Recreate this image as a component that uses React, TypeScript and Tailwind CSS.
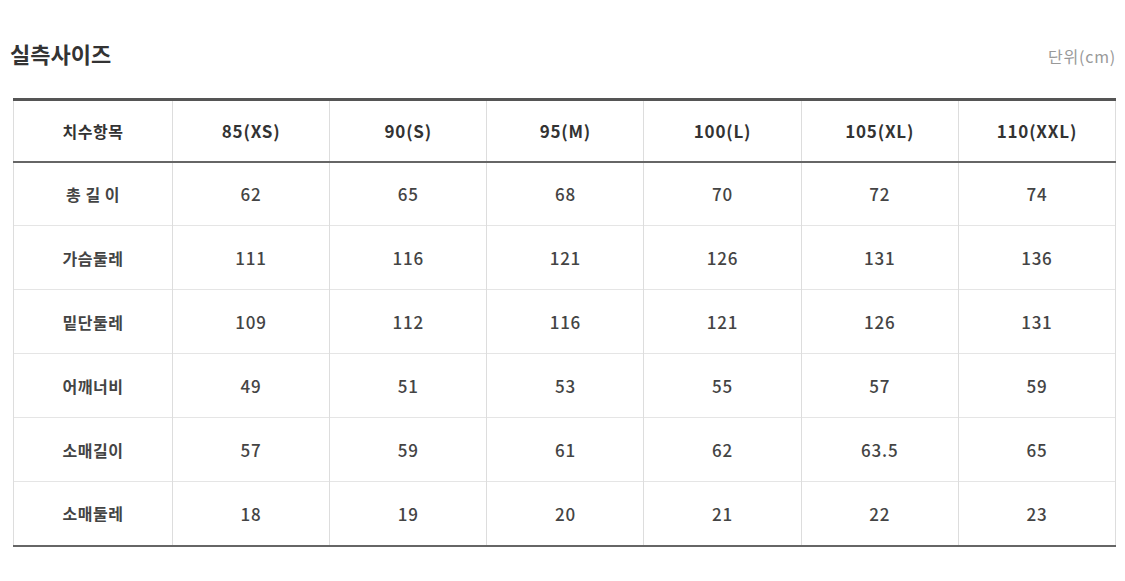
import React from "react";

const sizes = ["85(XS)", "90(S)", "95(M)", "100(L)", "105(XL)", "110(XXL)"];
const rows: [string, string[]][] = [
  ["총 길 이", ["62", "65", "68", "70", "72", "74"]],
  ["가슴둘레", ["111", "116", "121", "126", "131", "136"]],
  ["밑단둘레", ["109", "112", "116", "121", "126", "131"]],
  ["어깨너비", ["49", "51", "53", "55", "57", "59"]],
  ["소매길이", ["57", "59", "61", "62", "63.5", "65"]],
  ["소매둘레", ["18", "19", "20", "21", "22", "23"]],
];

export default function App() {
  return (
    <div
      className="w-[1125px] h-[581px] bg-white text-[#333]"
      style={{ fontFamily: '"Noto Sans CJK KR", "Noto Sans", sans-serif' }}
    >
      <div className="flex items-end justify-between pl-[10px] pr-[9px] pt-[36px] h-[68px]">
        <div className="text-[22px] font-bold leading-[30px] text-[#333]">실측사이즈</div>
        <div className="text-[16px] leading-[22px] text-[#999] tracking-[0.8px] mb-[1px]">단위(cm)</div>
      </div>
      <div className="pl-[13px] pr-[9px] pt-[30px]">
        <table className="w-full border-collapse table-fixed border-t-[3px] border-t-[#555] border-b-2 border-b-[#666]">
          <colgroup>
            <col className="w-[159px]" />
            <col />
            <col />
            <col />
            <col />
            <col />
            <col />
          </colgroup>
          <thead>
            <tr className="h-[62px] border-b-2 border-b-[#666]">
              <th className="border-l border-l-[#ddd] border-r border-r-[#ddd] text-[16px] font-bold text-[#333] tracking-[0.5px]">치수항목</th>
              {sizes.map((s) => (
                <th
                  key={s}
                  className="text-[17px] font-bold text-[#333] border-r border-r-[#ddd] tracking-[0.8px]"
                >
                  {s}
                </th>
              ))}
            </tr>
          </thead>
          <tbody>
            {rows.map(([label, vals], ri) => (
              <tr key={label} className={`h-[64px] ${ri < rows.length - 1 ? "border-b border-b-[#e5e5e5]" : ""}`}>
                <td className="border-l border-l-[#ddd] border-r border-r-[#ddd] text-center text-[16px] font-semibold text-[#444] tracking-[0.5px]">
                  {label}
                </td>
                {vals.map((v, i) => (
                  <td key={i} className="border-r border-r-[#ddd] text-center text-[17px] font-medium text-[#444] tracking-[0.8px]">
                    {v}
                  </td>
                ))}
              </tr>
            ))}
          </tbody>
        </table>
      </div>
    </div>
  );
}
